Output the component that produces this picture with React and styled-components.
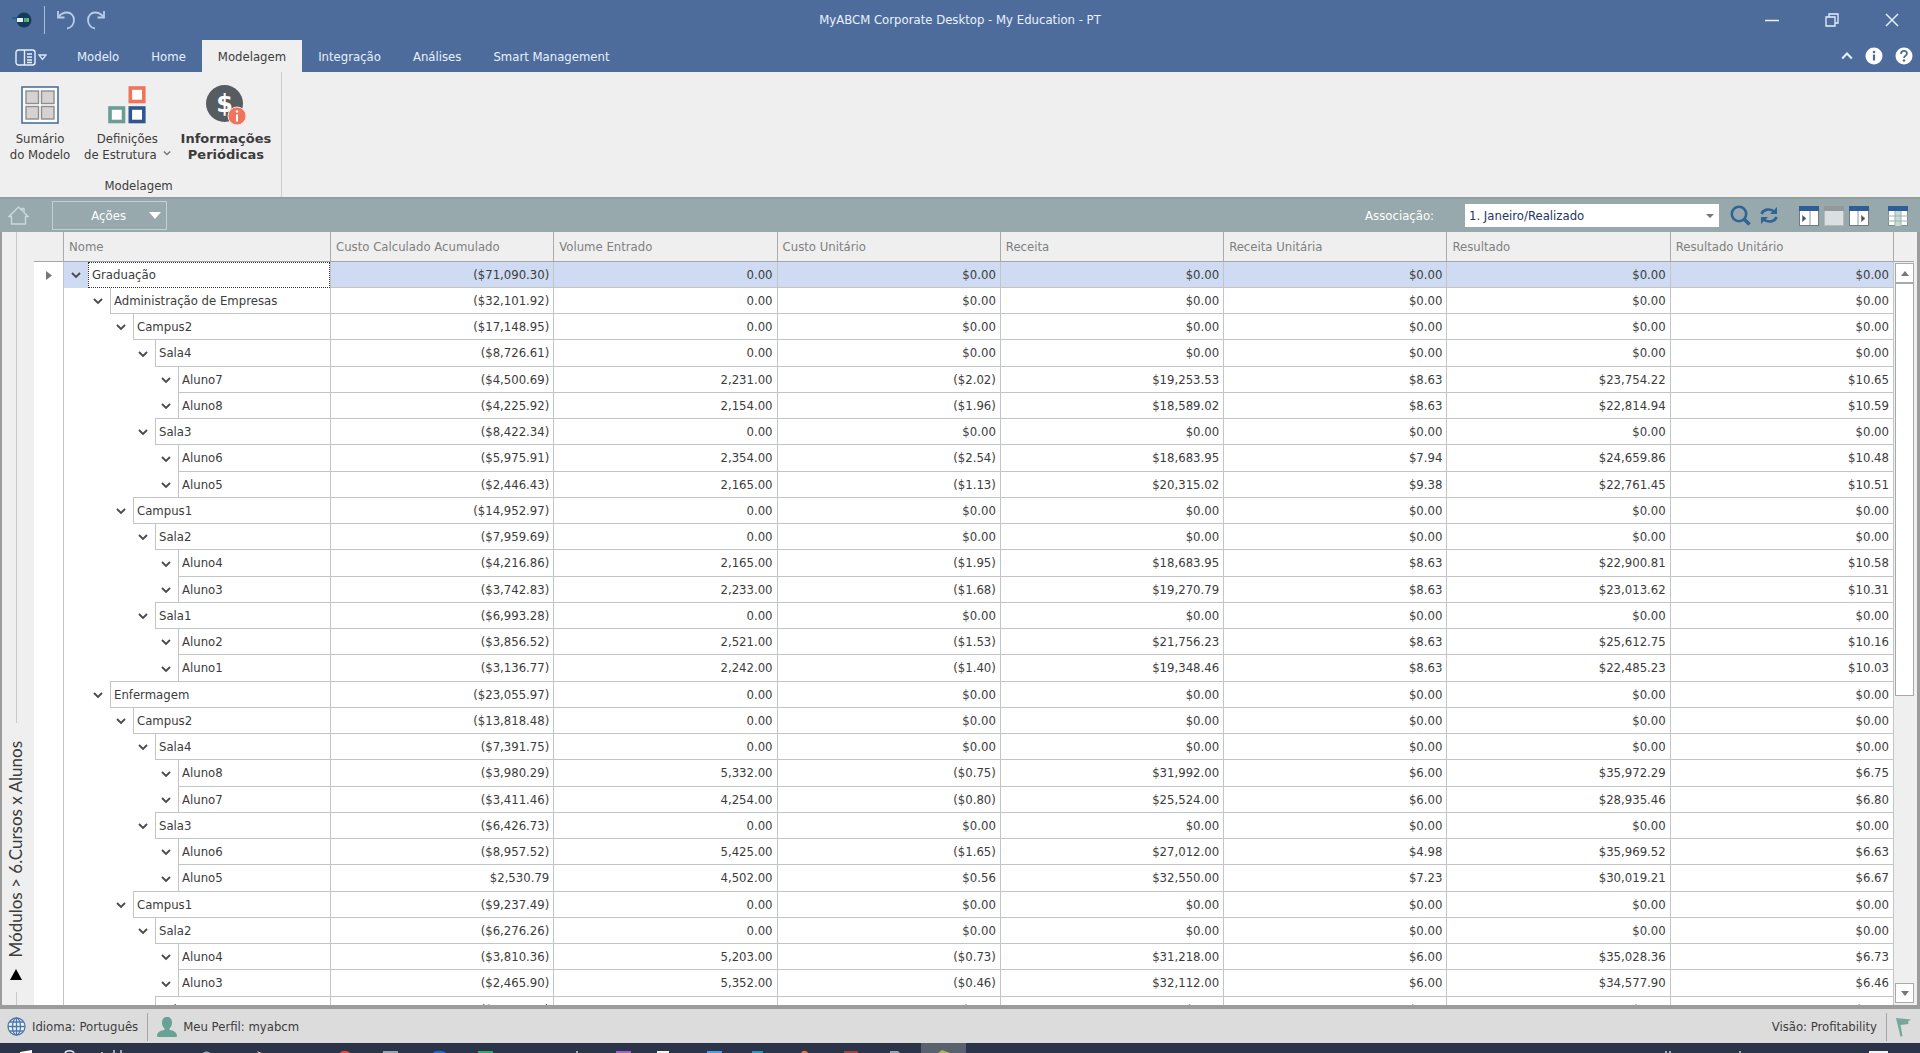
import React from "react";
import styled, { createGlobalStyle, css } from "styled-components";

const line = "#c2c4c6";

const GlobalStyle = createGlobalStyle`
  *, *::before, *::after { box-sizing: border-box; }
  body { margin: 0; background: #efefef; }
  body, button, select, table {
    font-family: "DejaVu Sans Condensed", "Noto Sans", "Open Sans", sans-serif;
    font-size: 13px;
    line-height: 16px;
    color: #3c3c3c;
  }
  button { margin: 0; padding: 0; border: 0; background: none; }
  svg { display: block; flex: none; }
`;

const Shell = styled.div`
  display: flex;
  flex-direction: column;
  height: 100vh;
  overflow: hidden;
`;

/* Title bar and ribbon */

const TitleBar = styled.header`
  display: grid;
  grid-template-columns: 1fr auto 1fr;
  align-items: center;
  height: 40px;
  background: #4e6c9b;
  color: #eaf2ff;
`;

const QuickTools = styled.div`
  display: flex;
  align-items: center;
  gap: 12px;
  padding-left: 12px;
`;

const QuickDivider = styled.span`
  width: 1px;
  height: 28px;
  background: #a9bddd;
`;

const Title = styled.h1`
  margin: 0;
  font-size: 13px;
  font-weight: 400;
  line-height: 16px;
`;

const WindowButtons = styled.div`
  display: flex;
  justify-content: flex-end;
  padding-right: 21px;
  gap: 46px;
`;

const TabBar = styled.nav`
  display: flex;
  align-items: stretch;
  height: 32px;
  background: #4e6c9b;
`;

const FileButton = styled.button`
  display: flex;
  align-items: center;
  gap: 2px;
  width: 61px;
  padding: 2px 0 0 15px;
`;

const Tab = styled.button`
  padding: 2px 16px 0;
  color: ${(p) => (p.$active ? "#3c3c3c" : "#e6f0ff")};
  background: ${(p) => (p.$active ? "#efefef" : "transparent")};
`;

const TabTools = styled.div`
  display: flex;
  align-items: center;
  gap: 12px;
  margin-left: auto;
  padding-right: 7px;
`;

const Ribbon = styled.section`
  display: flex;
  height: 125px;
  background: #efefef;
`;

const RibbonGroup = styled.div`
  display: flex;
  flex-direction: column;
  justify-content: space-between;
  padding: 14px 10px 3px 6px;
  border-right: 1px solid #cdcdcd;
`;

const RibbonButtons = styled.div`
  display: flex;
  gap: 10px;
`;

const RibbonButton = styled.button`
  display: flex;
  flex-direction: column;
  align-items: center;
  gap: 7px;
  min-width: 68px;
  ${(p) =>
    p.$bold &&
    css`
      font-family: "DejaVu Sans", "Noto Sans", sans-serif;
      font-weight: 700;
    `}
`;

const RibbonLabel = styled.span`
  display: block;
  white-space: nowrap;

  svg { display: inline-block; margin-left: 6px; vertical-align: 2px; }
`;

const GroupCaption = styled.div`
  text-align: center;
`;

/* Toolbar */

const Toolbar = styled.div`
  display: flex;
  align-items: center;
  height: 35px;
  padding: 0 12px 0 8px;
  background: #98a9ad;
  border-top: 2px solid #919e9e;
`;

const ActionsButton = styled.button`
  display: flex;
  align-items: center;
  justify-content: flex-end;
  gap: 23px;
  width: 115px;
  height: 29px;
  margin-left: 23px;
  padding-right: 5px;
  border: 1px solid #c0d0d4;
  color: #fff;
`;

const FieldLabel = styled.label`
  margin-left: auto;
  margin-right: 31px;
  color: #fff;
`;

const SelectWrap = styled.div`
  position: relative;
  width: 254px;

  svg { position: absolute; right: 5px; top: 10px; pointer-events: none; }
`;

const Select = styled.select`
  appearance: none;
  width: 100%;
  height: 23px;
  padding: 0 20px 0 4px;
  border: 0;
  border-radius: 0;
  background: #fff;
  color: #26355f;
`;

const ToolGroup = styled.div`
  display: flex;
  align-items: center;
  gap: ${(p) => p.$gap}px;
  margin-left: ${(p) => p.$before}px;
`;

/* Body */

const Body = styled.main`
  display: flex;
  flex: 1;
  min-height: 0;
  background: #efefef;
  border: solid #9c9c9c;
  border-width: 0 3px 4px 2px;
`;

const SideTab = styled.aside`
  display: flex;
  flex-direction: column;
  align-items: center;
  width: 28px;
  margin-right: 4px;
`;

const SideRule = styled.span`
  width: 1px;
  background: #c8c8c8;
  ${(p) => (p.$grow ? css`flex: 1;` : css`height: 13px;`)}
`;

const SideButton = styled.button`
  display: flex;
  flex-direction: column;
  align-items: center;
  gap: 12px;
  padding: 18px 0 12px;
`;

const SideLabel = styled.span`
  writing-mode: vertical-rl;
  transform: rotate(180deg);
  font-family: Lato, "Open Sans", sans-serif;
  font-size: 17px;
  line-height: 20px;
  white-space: nowrap;
`;

const GridPane = styled.div`
  flex: 1;
  min-width: 0;
  overflow: hidden;
`;

const Table = styled.table`
  width: 100%;
  table-layout: fixed;
  border-collapse: separate;
  border-spacing: 0;
`;

const HeadCell = styled.th`
  height: 30px;
  padding: 0 5px;
  border-right: 1px solid #a9abad;
  border-bottom: 1px solid #a3a6aa;
  background: #efefef;
  color: #808080;
  font-weight: 400;
  text-align: left;
  white-space: nowrap;
  overflow: hidden;
`;

const Row = styled.tr`
  --row: 26px;
  background: ${(p) => (p.$selected ? "#cedbf3" : "#fff")};

  &:nth-child(4n) { --row: 27px; }
`;

const Cell = styled.td`
  height: var(--row);
  padding: 0 4px;
  border-right: 1px solid ${line};
  border-bottom: 1px solid ${line};
  text-align: right;
  white-space: nowrap;
`;

const MarkerCell = styled.td`
  padding: 0 0 0 12px;
  border-right: 1px solid ${line};
  background: #fff;
`;

const NameCell = styled.th`
  padding: 0;
  border-right: 1px solid ${line};
  font-weight: 400;
  text-align: left;
`;

const indents = [24, 46, 69, 91, 114];

const NameLine = styled.div`
  display: grid;
  grid-template-columns: ${(p) => indents[p.$level]}px 1fr;
  height: var(--row);
`;

const Toggle = styled.button`
  display: flex;
  align-items: center;
  justify-content: flex-end;
  padding-right: 7px;
`;

const NameBox = styled.span`
  display: flex;
  align-items: center;
  padding-left: 3px;
  white-space: nowrap;
  background: #fff;
  ${(p) =>
    p.$focused
      ? css`border: 1px dotted #333;`
      : css`
          border-left: 1px solid ${line};
          border-bottom: 1px solid ${line};
          box-shadow: ${p.$stepBack ? `0 -1px 0 ${line}` : "none"};
        `}
`;

const ScrollBar = styled.div`
  display: flex;
  flex-direction: column;
  width: 23px;
  padding-right: 3px;
`;

const ScrollHead = styled.div`
  height: 30px;
  border-bottom: 1px solid #a3a6aa;
`;

const ScrollTrack = styled.div`
  display: flex;
  flex-direction: column;
  flex: 1;
  padding: 1px 0 2px 1px;
`;

const ScrollButton = styled.button`
  display: flex;
  align-items: center;
  justify-content: center;
  height: 20px;
  border: 1px solid #a9a9a9;
  background: #fff;
`;

const ScrollSpace = styled.div`
  flex: 1;
`;

const ScrollThumb = styled.div`
  height: 59%;
  border: 1px solid #a9a9a9;
  background: #fff;
`;

/* Status bar and task bar */

const StatusBar = styled.footer`
  display: flex;
  align-items: center;
  height: 34px;
  padding: 1px 9px 0 7px;
  background: #dcdcdc;
`;

const StatusItem = styled.span`
  display: flex;
  align-items: center;
  gap: 6px;
  margin-left: ${(p) => (p.$end ? "auto" : "0")};
`;

const StatusDivider = styled.span`
  width: 1px;
  height: 28px;
  margin: 0 9px;
  background: #a6a6a6;
`;

const TaskBar = styled.div`
  height: 10px;
  overflow: hidden;
  background: #2b3448;
`;

/* Icons */

const AppLogo = () => (
  <svg width="20" height="18" viewBox="0 0 20 18">
    <path d="M0 6h8v2H0z" fill="#2f5f86" />
    <circle cx="12" cy="9" r="7.5" fill="#163a5c" />
    <rect x="5" y="7" width="6" height="4" fill="#e6f3f6" />
    <path d="M12 7h2a2 2 0 0 1 0 4h-2z" fill="#4fae6e" />
    <path d="M16 7v4" stroke="#8fd16a" strokeWidth="1.5" />
  </svg>
);

const Undo = ({ flip }) => (
  <svg width="18" height="20" viewBox="0 0 18 20">
    <g transform={flip ? "matrix(-1 0 0 1 18 0)" : undefined} fill="none" stroke="#b7cdee" strokeWidth="1.8">
      <path d="M1 1v6.500h6.500" />
      <path d="M1.500 7C4 3.500 7 2.500 10 2.500c4 0 7 3 7 7.500s-3 8-7 8.500" />
    </g>
  </svg>
);

const FileIcon = () => (
  <>
    <svg width="21" height="17" viewBox="0 0 21 17" fill="none" stroke="#e6f0ff" strokeWidth="1.400">
      <rect x="1" y="1" width="19" height="15" rx="2.500" />
      <path d="M9.500 1v15M12 5h5M12 8h5M12 11h5M12 13.500h5" />
    </svg>
    <svg width="9" height="7" viewBox="0 0 9 7">
      <path d="M1 1h7L4.500 5.500z" fill="none" stroke="#d7e5fb" strokeWidth="1.300" />
    </svg>
  </>
);

const Chevron = ({ size = 10, color = "#4a4a4a", up, width = 1.8 }) => (
  <svg width={size} height={size} viewBox="0 0 10 10">
    <path d={up ? "M1 7l4-4 4 4" : "M1 3l4 4 4-4"} fill="none" stroke={color} strokeWidth={width} />
  </svg>
);

const Triangle = ({ w, h, color, up }) => (
  <svg width={w} height={h} viewBox="0 0 10 10" preserveAspectRatio="none">
    <path d={up ? "M0 10h10L5 0z" : "M0 0h10L5 10z"} fill={color} />
  </svg>
);

const InfoIcon = () => (
  <svg width="18" height="18" viewBox="0 0 18 18">
    <circle cx="9" cy="9" r="8.500" fill="#fff" />
    <circle cx="9" cy="5" r="1.300" fill="#4e6c9b" />
    <path d="M9 7.500v6" stroke="#4e6c9b" strokeWidth="2.200" />
  </svg>
);

const HelpIcon = () => (
  <svg width="18" height="18" viewBox="0 0 18 18">
    <circle cx="9" cy="9" r="8.500" fill="#fff" />
    <path d="M6 7c0-4 6-4 6-.5C12 9 9 8.500 9 11" fill="none" stroke="#4e6c9b" strokeWidth="1.800" />
    <circle cx="9" cy="13.500" r="1.200" fill="#4e6c9b" />
  </svg>
);

const SummaryIcon = () => (
  <svg width="38" height="38" viewBox="0 0 38 38">
    <rect x="1" y="1" width="36" height="36" fill="#fbfcff" stroke="#4d7198" strokeWidth="1.600" />
    <g fill="#d6d2d2" stroke="#8e8e8e" strokeWidth="1.400">
      <rect x="5" y="5" width="12.500" height="12.500" />
      <rect x="20.500" y="5" width="12.500" height="12.500" />
      <rect x="5" y="20.500" width="12.500" height="12.500" />
      <rect x="20.500" y="20.500" width="12.500" height="12.500" />
    </g>
  </svg>
);

const StructureIcon = () => (
  <svg width="38" height="38" viewBox="0 0 38 38" fill="#fff" strokeWidth="3.600">
    <rect x="22.300" y="2" width="13.500" height="13.500" stroke="#f0735c" />
    <rect x="2" y="22" width="13.500" height="13.500" stroke="#6c9d93" />
    <rect x="22.300" y="22" width="13.500" height="13.500" stroke="#2f5690" />
  </svg>
);

const PeriodicIcon = () => (
  <svg width="40" height="38" viewBox="0 1 40 38" overflow="visible">
    <circle cx="18.500" cy="18.500" r="18.500" fill="#575c61" />
    <text x="18.500" y="27" textAnchor="middle" fontFamily="DejaVu Sans, sans-serif" fontWeight="700" fontSize="24" fill="#fff">$</text>
    <circle cx="31" cy="31" r="9" fill="#f0735c" stroke="#f6e5e1" strokeWidth="1" />
    <circle cx="31" cy="26.500" r="1.300" fill="#fff" />
    <path d="M31 29.500v7" stroke="#fff" strokeWidth="2" />
  </svg>
);

const HomeIcon = () => (
  <svg width="21" height="19" viewBox="0 0 21 19" fill="none" stroke="#c9dade" strokeWidth="1.400">
    <path d="M1 10.500L10.500 1l3.500 3.500V2.500h2V6.500l4 4h-2.500V18h-14v-7.500z" />
  </svg>
);

const SearchIcon = () => (
  <svg width="21" height="21" viewBox="0 0 21 21" fill="none" stroke="#2f6494">
    <circle cx="9" cy="9" r="7.200" strokeWidth="2.600" />
    <path d="M14 14l5.500 5.500" strokeWidth="3.600" />
  </svg>
);

const RefreshIcon = () => (
  <svg width="18" height="19" viewBox="0 0 18 19" fill="none" stroke="#2f6494" strokeWidth="2.600">
    <path d="M1.500 8C3 3.500 10 1.500 14.500 6" />
    <path d="M16.500 11C15 15.500 8 17.500 3.500 13" />
    <path d="M17 1v7h-7z" fill="#2f6494" stroke="none" />
    <path d="M1 18v-7h7z" fill="#2f6494" stroke="none" />
  </svg>
);

const PanelIcon = ({ side }) => (
  <svg width="20" height="20" viewBox="0 0 20 20">
    <rect x=".5" y=".5" width="19" height="19" fill={side ? "#fff" : "#dcdfdf"} stroke={side ? "#6f7b85" : "#b4b9ba"} />
    <rect width="20" height="5" fill={side ? "#2f5e97" : "#93999b"} />
    {side === "left" && <path d="M11 5v15M3.500 9.500v6l3.500-3z" fill="#4c4c4c" stroke="#6f7b85" strokeWidth=".8" />}
    {side === "right" && <path d="M9 5v15M12.500 9.500v6l3.500-3z" fill="#4c4c4c" stroke="#6f7b85" strokeWidth=".8" />}
  </svg>
);

const TableIcon = () => (
  <svg width="20" height="20" viewBox="0 0 20 20">
    <rect x=".5" y=".5" width="19" height="19" fill="#fff" stroke="#7e8f93" />
    <path d="M7 5h6v15H7z" fill="#c4dcd5" />
    <path d="M0 10h20M0 15h20M7 5v15M13 5v15" stroke="#9fb0b0" />
    <rect width="20" height="5" fill="#2f5e97" />
  </svg>
);

const GlobeIcon = () => (
  <svg width="19" height="19" viewBox="0 0 19 19" fill="#eef3fa" stroke="#4d78ad" strokeWidth="1.300">
    <circle cx="9.500" cy="9.500" r="8.500" />
    <ellipse cx="9.500" cy="9.500" rx="4" ry="8.500" />
    <path d="M9.500 1v17M1 9.500h17M2.500 5h14M2.500 14h14" />
  </svg>
);

const PersonIcon = () => (
  <svg width="20" height="20" viewBox="0 0 20 20" fill="#67a294">
    <path d="M10 0c3 0 5 2 5 5.500 0 3-1.500 6.500-5 6.500S5 8.500 5 5.500C5 2 7 0 10 0z" />
    <path d="M7.500 10h5v3c4 .5 7 2 7.500 5.500 0 1-.5 1.500-1.500 1.500h-17C.5 20 0 19.500 0 18.500.5 15 3.500 13.500 7.500 13z" />
  </svg>
);

const FlagIcon = () => (
  <svg width="15" height="20" viewBox="0 0 15 20" fill="#76a79a">
    <path d="M0 1l15 1.500-3 2 .5 2.500L4.500 8l2 11-2 .8z" />
  </svg>
);

const TaskIcons = () => (
  <svg width="1920" height="10" viewBox="0 0 1920 10">
    <rect x="921" width="45" height="10" fill="#59616f" />
    <path d="M20 9l12-2v3H20z" fill="#fff" />
    <path d="M65 10c1-3 8-3 9 0" fill="none" stroke="#dfe3ea" strokeWidth="1.500" />
    <path d="M102 9v1M114 7v3M121 7v3M577 8v2M1666 8v2M1670 8v2M1740 8v2" stroke="#c9cedb" strokeWidth="1.500" />
    <path d="M203 10c1-2 6-2 7 0zM383 8h15v2h-15zM890 8h8l2 2h-10z" fill="#9aa2ae" />
    <path d="M257 8l5 2h-4z" fill="#e0b0a0" />
    <path d="M340 10c1-3 8-3 10 0z" fill="#d8503c" />
    <path d="M433 10c1-3 11-3 13 0z" fill="#1f6fc0" />
    <path d="M478 8h15v2h-15z" fill="#2fa873" />
    <path d="M616 8h15v2h-15z" fill="#a262c4" />
    <path d="M657 8h12v2h-12zM1869 8h19v2h-19z" fill="#f4f4f4" />
    <path d="M707 8h15v2h-15z" fill="#4f9fdc" />
    <path d="M752 8h11v2h-11z" fill="#2b93c0" />
    <path d="M801 10c1-3 6-3 7 0z" fill="#e8743c" />
    <path d="M844 8h14v2h-14z" fill="#9c4440" />
    <path d="M938 10l4-3 8 3z" fill="#a9b84a" />
  </svg>
);

/* Data */

const columns = [
  "Custo Calculado Acumulado",
  "Volume Entrado",
  "Custo Unitário",
  "Receita",
  "Receita Unitária",
  "Resultado",
  "Resultado Unitário",
];

const zero = ["0.00", "$0.00", "$0.00", "$0.00", "$0.00", "$0.00"];

const rows = [
  [0, "Graduação", "($71,090.30)"],
  [1, "Administração de Empresas", "($32,101.92)"],
  [2, "Campus2", "($17,148.95)"],
  [3, "Sala4", "($8,726.61)"],
  [4, "Aluno7", "($4,500.69)", "2,231.00", "($2.02)", "$19,253.53", "$8.63", "$23,754.22", "$10.65"],
  [4, "Aluno8", "($4,225.92)", "2,154.00", "($1.96)", "$18,589.02", "$8.63", "$22,814.94", "$10.59"],
  [3, "Sala3", "($8,422.34)"],
  [4, "Aluno6", "($5,975.91)", "2,354.00", "($2.54)", "$18,683.95", "$7.94", "$24,659.86", "$10.48"],
  [4, "Aluno5", "($2,446.43)", "2,165.00", "($1.13)", "$20,315.02", "$9.38", "$22,761.45", "$10.51"],
  [2, "Campus1", "($14,952.97)"],
  [3, "Sala2", "($7,959.69)"],
  [4, "Aluno4", "($4,216.86)", "2,165.00", "($1.95)", "$18,683.95", "$8.63", "$22,900.81", "$10.58"],
  [4, "Aluno3", "($3,742.83)", "2,233.00", "($1.68)", "$19,270.79", "$8.63", "$23,013.62", "$10.31"],
  [3, "Sala1", "($6,993.28)"],
  [4, "Aluno2", "($3,856.52)", "2,521.00", "($1.53)", "$21,756.23", "$8.63", "$25,612.75", "$10.16"],
  [4, "Aluno1", "($3,136.77)", "2,242.00", "($1.40)", "$19,348.46", "$8.63", "$22,485.23", "$10.03"],
  [1, "Enfermagem", "($23,055.97)"],
  [2, "Campus2", "($13,818.48)"],
  [3, "Sala4", "($7,391.75)"],
  [4, "Aluno8", "($3,980.29)", "5,332.00", "($0.75)", "$31,992.00", "$6.00", "$35,972.29", "$6.75"],
  [4, "Aluno7", "($3,411.46)", "4,254.00", "($0.80)", "$25,524.00", "$6.00", "$28,935.46", "$6.80"],
  [3, "Sala3", "($6,426.73)"],
  [4, "Aluno6", "($8,957.52)", "5,425.00", "($1.65)", "$27,012.00", "$4.98", "$35,969.52", "$6.63"],
  [4, "Aluno5", "$2,530.79", "4,502.00", "$0.56", "$32,550.00", "$7.23", "$30,019.21", "$6.67"],
  [2, "Campus1", "($9,237.49)"],
  [3, "Sala2", "($6,276.26)"],
  [4, "Aluno4", "($3,810.36)", "5,203.00", "($0.73)", "$31,218.00", "$6.00", "$35,028.36", "$6.73"],
  [4, "Aluno3", "($2,465.90)", "5,352.00", "($0.46)", "$32,112.00", "$6.00", "$34,577.90", "$6.46"],
  [3, "Sala1", "($2,961.23)"],
].map(([level, name, cost, ...rest]) => ({
  level,
  name,
  values: [cost, ...(rest.length ? rest : zero)],
}));

const tabs = ["Modelo", "Home", "Modelagem", "Integração", "Análises", "Smart Management"];

export default function App() {
  return (
    <Shell>
      <GlobalStyle />
      <TitleBar>
        <QuickTools>
          <AppLogo />
          <QuickDivider />
          <button aria-label="Desfazer"><Undo /></button>
          <button aria-label="Refazer"><Undo flip /></button>
        </QuickTools>
        <Title>MyABCM Corporate Desktop - My Education - PT</Title>
        <WindowButtons>
          <button aria-label="Minimizar">
            <svg width="14" height="14"><path d="M0 7.500h14" stroke="#e6f0ff" strokeWidth="1.500" /></svg>
          </button>
          <button aria-label="Restaurar">
            <svg width="14" height="14" fill="none" stroke="#e6f0ff" strokeWidth="1.300">
              <path d="M1 4h9v9H1zM4 4V1h9v9h-3" />
            </svg>
          </button>
          <button aria-label="Fechar">
            <svg width="14" height="14"><path d="M1 1l12 12M13 1L1 13" stroke="#e6f0ff" strokeWidth="1.500" /></svg>
          </button>
        </WindowButtons>
      </TitleBar>

      <TabBar>
        <FileButton aria-label="Arquivo"><FileIcon /></FileButton>
        {tabs.map((t) => (
          <Tab key={t} $active={t === "Modelagem"}>{t}</Tab>
        ))}
        <TabTools>
          <button aria-label="Recolher"><Chevron up size={12} color="#e6f0ff" /></button>
          <button aria-label="Informações"><InfoIcon /></button>
          <button aria-label="Ajuda"><HelpIcon /></button>
        </TabTools>
      </TabBar>

      <Ribbon>
        <RibbonGroup>
          <RibbonButtons>
            <RibbonButton>
              <SummaryIcon />
              <RibbonLabel>Sumário<br />do Modelo</RibbonLabel>
            </RibbonButton>
            <RibbonButton>
              <StructureIcon />
              <RibbonLabel>Definições<br />de Estrutura<Chevron size={8} color="#777" /></RibbonLabel>
            </RibbonButton>
            <RibbonButton $bold>
              <PeriodicIcon />
              <RibbonLabel>Informações<br />Periódicas</RibbonLabel>
            </RibbonButton>
          </RibbonButtons>
          <GroupCaption>Modelagem</GroupCaption>
        </RibbonGroup>
      </Ribbon>

      <Toolbar>
        <button aria-label="Início"><HomeIcon /></button>
        <ActionsButton>Ações <Triangle w={12} h={7} color="#fff" /></ActionsButton>
        <FieldLabel htmlFor="associacao">Associação:</FieldLabel>
        <SelectWrap>
          <Select id="associacao" defaultValue="1">
            <option value="1">1. Janeiro/Realizado</option>
          </Select>
          <Triangle w={8} h={4} color="#777" />
        </SelectWrap>
        <ToolGroup $before={11} $gap={9}>
          <button aria-label="Pesquisar"><SearchIcon /></button>
          <button aria-label="Atualizar"><RefreshIcon /></button>
        </ToolGroup>
        <ToolGroup $before={21} $gap={5}>
          <button aria-label="Painel esquerdo"><PanelIcon side="left" /></button>
          <button aria-label="Painel"><PanelIcon /></button>
          <button aria-label="Painel direito"><PanelIcon side="right" /></button>
        </ToolGroup>
        <ToolGroup $before={19} $gap={0}>
          <button aria-label="Colunas"><TableIcon /></button>
        </ToolGroup>
      </Toolbar>

      <Body>
        <SideTab>
          <SideRule $grow />
          <SideButton>
            <SideLabel>Módulos &gt; 6.Cursos x Alunos</SideLabel>
            <Triangle up w={12} h={11} color="#000" />
          </SideButton>
          <SideRule />
        </SideTab>

        <GridPane>
          <Table>
            <colgroup>
              <col style={{ width: 30 }} />
              <col style={{ width: 267 }} />
              {columns.map((c) => <col key={c} />)}
            </colgroup>
            <thead>
              <tr>
                <HeadCell aria-label="Seleção" />
                <HeadCell>Nome</HeadCell>
                {columns.map((c) => <HeadCell key={c}>{c}</HeadCell>)}
              </tr>
            </thead>
            <tbody>
              {rows.map((r, i) => (
                <Row key={i} $selected={i === 0}>
                  <MarkerCell>
                    {i === 0 && (
                      <svg width="6" height="9"><path d="M0 0v9l6-4.500z" fill="#777" /></svg>
                    )}
                  </MarkerCell>
                  <NameCell scope="row">
                    <NameLine $level={r.level}>
                      <Toggle aria-label={`Recolher ${r.name}`}><Chevron /></Toggle>
                      <NameBox $focused={i === 0} $stepBack={i > 0 && rows[i - 1].level > r.level}>{r.name}</NameBox>
                    </NameLine>
                  </NameCell>
                  {r.values.map((v, j) => <Cell key={j}>{v}</Cell>)}
                </Row>
              ))}
            </tbody>
          </Table>
        </GridPane>

        <ScrollBar>
          <ScrollHead />
          <ScrollTrack>
            <ScrollButton aria-label="Rolar para cima"><Triangle up w={8} h={5} color="#777" /></ScrollButton>
            <ScrollSpace><ScrollThumb /></ScrollSpace>
            <ScrollButton aria-label="Rolar para baixo"><Triangle w={8} h={5} color="#777" /></ScrollButton>
          </ScrollTrack>
        </ScrollBar>
      </Body>

      <StatusBar>
        <StatusItem><GlobeIcon />Idioma: Português</StatusItem>
        <StatusDivider />
        <StatusItem><PersonIcon />Meu Perfil: myabcm</StatusItem>
        <StatusItem $end>Visão: Profitability</StatusItem>
        <StatusDivider />
        <FlagIcon />
      </StatusBar>
      <TaskBar><TaskIcons /></TaskBar>
    </Shell>
  );
}
